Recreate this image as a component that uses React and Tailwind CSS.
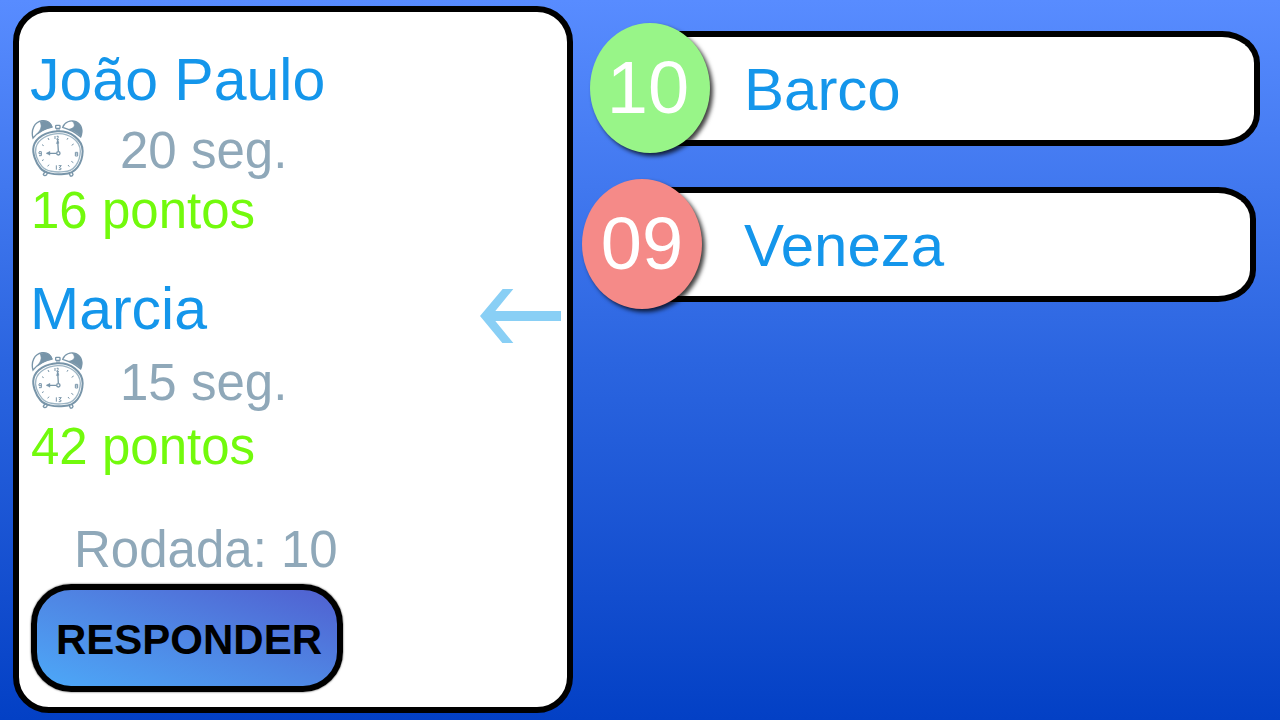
import React, { useState } from 'react';

const players = [
    { name: 'João Paulo', seconds: 20, points: 16, rowStyle: 'pt-[9px]' },
    { name: 'Marcia', seconds: 15, points: 42, rowStyle: 'pt-3 pb-1' },
];

const answers = [
    { number: '10', text: 'Barco', rowStyle: 'ml-[17px] mr-5', badgeStyle: 'bg-[#98f588] pr-1', barStyle: 'pl-[94px]' },
    { number: '09', text: 'Veneza', rowStyle: 'ml-[9px] mr-6', badgeStyle: 'bg-[#f58a88]', barStyle: 'pl-[102px]' },
];

const AlarmClock = () => (
    <svg className="w-[54px] h-[58px] shrink-0" viewBox="30 22 162 174" fill="none" stroke="#7895a9" aria-hidden="true">
        {/* bells */}
        <path d="M39 79 C32 55 43 31 66 27 C82 25 92 34 96 46 C74 50 54 61 39 79Z" fill="#fff" strokeWidth="4" />
        <path d="M60 30 C80 24 93 34 96 46 C82 49 66 56 54 65 C60 54 68 46 60 30Z" fill="#7895a9" strokeWidth="2" />
        <path d="M128 47 C133 31 152 24 168 30 C185 38 190 56 182 76 C167 63 149 53 128 47Z" fill="#fff" strokeWidth="4" />
        <path d="M157 29 C181 31 191 52 182 74 C172 64 158 57 146 53 C164 50 168 40 157 29Z" fill="#7895a9" strokeWidth="2" />
        {/* knob */}
        <rect x="107" y="41" width="13" height="9" rx="2" strokeWidth="4" />
        <path d="M111 51 V61 M117 51 V61" strokeWidth="3" />
        {/* feet */}
        <path d="M77 177 L70 188 Q74 195 80 189 L84 180 M147 183 L151 193 Q157 195 159 188 L154 178" strokeWidth="4" />
        {/* case */}
        <path d="M112 59 C151 57 188 83 188 119 C187 157 166 187 132 187 C104 190 74 185 61 169 C47 153 36 124 41 104 C48 77 78 61 112 59Z" fill="#fff" strokeWidth="6" />
        <path d="M112 66 C147 64 181 87 181 119 C180 151 163 180 131 180 C106 183 78 179 66 164 C52 148 43 124 48 107 C54 83 82 68 112 66Z" stroke="#9db5c4" strokeWidth="4" />
        {/* ticks and figures */}
        <path d="M84 79 L87 85 M66 99 L71 102 M66 147 L71 144 M83 164 L87 159 M141 84 L144 79 M155 101 L161 97 M154 149 L160 153 M144 160 L148 165" strokeWidth="3" />
        <path d="M105 73 V82 M110 74 Q117 71 114 78 L110 83 H117 M109 161 V174 M116 162 H124 L118 168 Q127 170 122 174 H116" strokeWidth="3" />
        <path d="M57 120 H64 V132 H57 M57 121 V126 H64 M166 122 H173 V133 H166 Z M166 127 H173" strokeWidth="3" />
        {/* hands */}
        <path d="M115 118 L113 86 M109 125 H82" strokeWidth="4" />
        <path d="M109 96 L113 83 L117 95Z M90 119 L78 125 L90 131Z" fill="#7895a9" strokeWidth="1" />
        <circle cx="115" cy="125" r="5" fill="#fff" strokeWidth="4" />
    </svg>
);

const TurnArrow = () => (
    <svg className="w-[81px] h-[54px] self-end -mb-1 shrink-0" viewBox="60 54 243 162" role="img" aria-label="Vez do jogador">
        <path d="M60 135 L128 54 H160 L106 120 H303 V150 H106 L160 216 H127Z" fill="#89cff5" />
    </svg>
);

const Player = ({ player, isTurn }) => (
    <section>
        <div className="flex justify-between h-[60px]">
            <h2 className="text-[59px] leading-[60px] text-[#1496eb]">{player.name}</h2>
            {isTurn && <TurnArrow />}
        </div>
        <div className={player.rowStyle}>
            <div className="flex items-start gap-9">
                <AlarmClock />
                <p className="text-[51px] leading-[64px] text-[#8fa8b9]">{player.seconds} seg.</p>
            </div>
        </div>
        <p className="pl-px text-[51px] leading-[56px] text-[#72fa0c]">{player.points} pontos</p>
    </section>
);

const Answer = ({ answer }) => (
    <li className={`flex items-center ${answer.rowStyle}`}>
        <div className={`z-10 flex items-center justify-center shrink-0 w-[120px] h-[130px] rounded-[50%] text-[74px] leading-none text-white shadow-[3px_3px_4px_rgba(0,0,0,0.75)] ${answer.badgeStyle}`}>
            {answer.number}
        </div>
        <div className={`flex-1 flex items-center -ml-[60px] pt-1 h-[115px] bg-white border-6 border-l-0 border-black rounded-r-[38px_32px] text-[60px] leading-none text-[#1496eb] ${answer.barStyle}`}>
            {answer.text}
        </div>
    </li>
);

const App = () => {
    const [turn, setTurn] = useState(1); // index of the player that has to answer

    const handleClick = () => {
        setTurn((turn + 1) % players.length);
    }

    return (
        <div className="flex min-h-screen bg-linear-to-b from-[#588cff] via-[#2b65e0] to-[#0340c5] font-['Liberation_Sans',Arial,sans-serif]">

            <main className="w-[43.75%] ml-[13px] mt-1.5 mb-[7px] pt-[38px] pl-[11px] pr-1.5 bg-white border-6 border-black rounded-[36px]">
                <div className="flex flex-col gap-10">
                    {players.map((player, i) => (
                        <Player key={player.name} player={player} isTurn={i === turn} />
                    ))}
                </div>

                <p className="mt-12 ml-11 text-[51px] leading-[54px] text-[#8fa8b9]">Rodada: 10</p>

                <button
                    type="button"
                    onClick={handleClick}
                    className="block mt-[7px] ml-px pt-1 pl-1 w-[312px] h-[108px] border-6 border-black rounded-[40px] bg-linear-to-tr from-[#4ca8f8] via-[#4f86e4] to-[#5060d0] shadow-[0_0_2px_rgba(0,0,0,0.8)] font-bold text-[42px] leading-none text-black cursor-pointer"
                >
                    RESPONDER
                </button>
            </main>

            <ul className="flex-1 flex flex-col gap-[26px] pt-[23px]">
                {answers.map((answer) => (
                    <Answer key={answer.number} answer={answer} />
                ))}
            </ul>

        </div>
    )
}

export default App;
